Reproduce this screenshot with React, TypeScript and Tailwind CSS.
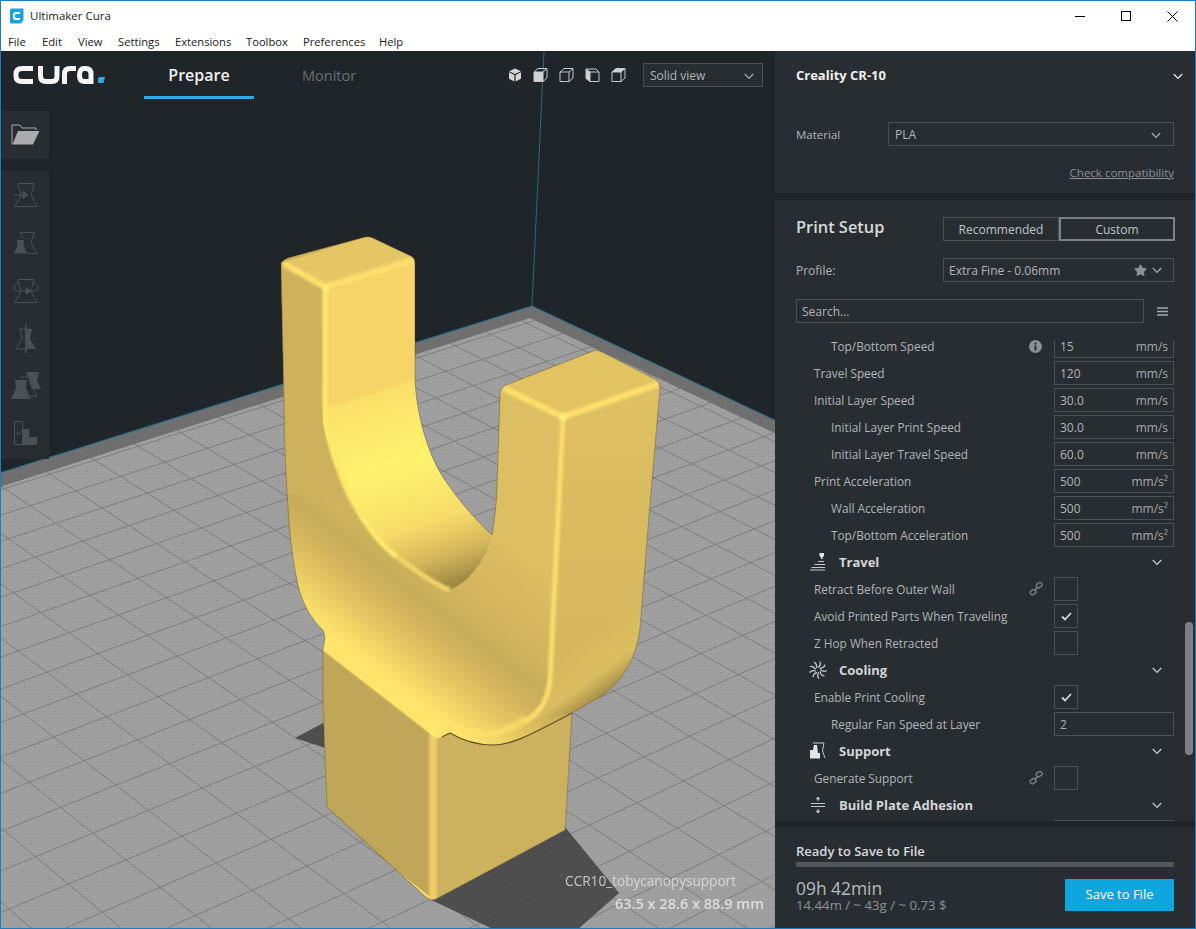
import { Star } from "lucide-react"

const P0 = { x: 532, y: 306 }
const VA = { x: 4043, y: -791 }
const VB = { x: -2108, y: -932 }

const SILHOUETTE =
  "M281 263 Q283 260 288 258 L365 237 Q369 236 373 238 L411 256 Q415 258 415 264 L415 380 C417 420 430 460 447 483 C462 505 478 522 492 535 C495 515 497 500 497 487 L500 395 Q500 388 506 385 L593 351 Q597 349 602 352 L655 379 Q660 382 660 388 L650 503 L640 628 C637 655 625 680 600 697 L572 713 L565 830 L436 899 Q431 901 427 898 L327 807 L323 703 L323 650 L325 637 L323 630 C310 618 300 600 296 575 C291 550 288 520 285 453 Z"

const RIGHT_FACE =
  "M566 417 L662 383 L650 503 L640 628 C637 655 625 680 600 697 L572 713 L526 722 C545 708 548 695 549 680 L560 520 Z"

// grid lines of the build plate, spaced in perspective
function gridLines() {
  const lines: { x1: number; y1: number; x2: number; y2: number }[] = []
  for (let i = 0; i < 42; i++) {
    const a = 0.0074 + 0.0102 * i
    const f = a / (1 - a)
    const px = P0.x + (P0.x - VB.x) * f
    const py = P0.y + (P0.y - VB.y) * f
    const s = (py - VA.y) / (px - VA.x)
    lines.push({ x1: -20, y1: py + s * (-20 - px), x2: 800, y2: py + s * (800 - px) })
  }
  for (let i = 0; i < 42; i++) {
    const a = 0.0071 + 0.0098 * i
    const f = a / (1 - a)
    const px = P0.x + (P0.x - VA.x) * f
    const py = P0.y + (P0.y - VA.y) * f
    const s = (py - VB.y) / (px - VB.x)
    lines.push({ x1: -900, y1: py + s * (-900 - px), x2: 800, y2: py + s * (800 - px) })
  }
  return lines
}

function Scene() {
  const lines = gridLines()
  return (
    <svg className="absolute inset-0" width="774" height="877" viewBox="1 51 774 877">
      <defs>
        <pattern id="dots" width="3" height="3" patternUnits="userSpaceOnUse">
          <rect width="3" height="3" fill="#a1a1a1" />
          <rect width="1" height="1" fill="#939393" />
          <rect x="1.5" y="1.5" width="1" height="1" fill="#989898" />
        </pattern>
        <clipPath id="plate">
          <polygon points="532,306 -10,476 -10,940 800,940 800,432" />
        </clipPath>
        <clipPath id="model">
          <path d={SILHOUETTE} />
        </clipPath>
        <filter id="b1" x="-20%" y="-20%" width="140%" height="140%">
          <feGaussianBlur stdDeviation="1" />
        </filter>
        <filter id="b15" x="-20%" y="-20%" width="140%" height="140%">
          <feGaussianBlur stdDeviation="1.5" />
        </filter>
        <filter id="b2" x="-20%" y="-20%" width="140%" height="140%">
          <feGaussianBlur stdDeviation="2" />
        </filter>
        <filter id="strip" x="-50%" y="-5%" width="200%" height="110%">
          <feGaussianBlur stdDeviation="1" />
        </filter>
        <linearGradient id="band" gradientUnits="userSpaceOnUse" x1="380" y1="694" x2="502" y2="536">
          <stop offset="0" stopColor="#ffe56d" />
          <stop offset="0.09" stopColor="#ffe36c" />
          <stop offset="0.25" stopColor="#e6c963" />
          <stop offset="0.42" stopColor="#cfb25b" />
          <stop offset="0.5" stopColor="#c8ad5a" />
          <stop offset="0.7" stopColor="#d3b65e" />
          <stop offset="1" stopColor="#dcbf62" />
        </linearGradient>
        <linearGradient id="curve" gradientUnits="userSpaceOnUse" x1="368" y1="392" x2="432" y2="590">
          <stop offset="0" stopColor="#f6d468" />
          <stop offset="0.03" stopColor="#fae06a" />
          <stop offset="0.38" stopColor="#fff36e" />
          <stop offset="0.68" stopColor="#f6dc68" />
          <stop offset="0.86" stopColor="#d4b75c" />
          <stop offset="1" stopColor="#a08a45" />
        </linearGradient>
        <linearGradient id="right" x1="0" y1="0" x2="0" y2="1">
          <stop offset="0" stopColor="#dfc163" />
          <stop offset="1" stopColor="#d2b55d" />
        </linearGradient>
        <linearGradient id="under" gradientUnits="userSpaceOnUse" x1="585" y1="640" x2="622" y2="692">
          <stop offset="0" stopColor="#e4c863" stopOpacity="0" />
          <stop offset="0.55" stopColor="#dcc061" stopOpacity="0.7" />
          <stop offset="1" stopColor="#857239" />
        </linearGradient>
      </defs>

      <rect x="0" y="51" width="780" height="880" fill="#1f2528" />
      <polygon points="532,306 -10,476 -10,940 800,940 800,432" fill="#6f6f6f" />
      <polygon points="530,318 -10,490 -10,940 800,940 800,445" fill="url(#dots)" />
      <g clipPath="url(#plate)" stroke="#747474" strokeWidth="1" strokeOpacity="0.75">
        {lines.map((l, i) => (
          <line key={i} x1={l.x1} y1={l.y1} x2={l.x2} y2={l.y2} />
        ))}
      </g>
      <polyline points="-10,476 532,306 800,432" fill="none" stroke="#1f6f8e" strokeWidth="1" />
      <line x1="544" y1="51" x2="532" y2="306" stroke="#1f6f8e" strokeWidth="1" />

      <polygon
        points="295,738 325,722 330,810 427,898 495,930 577,930 619,893 565,827"
        fill="#474747"
        fillOpacity="0.92"
      />

      <g clipPath="url(#model)">
        <rect x="270" y="230" width="400" height="680" fill="url(#band)" />
        <path d="M270 230 H330 V440 L345 500 L270 490 Z" fill="#ceb15c" />
        <path d={RIGHT_FACE} fill="url(#right)" />
        <path d={RIGHT_FACE} fill="url(#under)" />
        <path
          d="M325 287 L415 259 L415 380 C417 420 430 460 447 483 C462 505 478 522 492 535 C487 557 470 582 450 590 C435 585 415 570 397 557 C370 537 350 500 340 473 C330 450 323 430 323 420 Z"
          fill="url(#curve)"
        />
        <polygon points="281,263 368,237 415,259 325,287" fill="#e5c665" />
        <polygon points="503,387 597,350 660,383 563,417" fill="#e2c362" />

        <g fill="none" filter="url(#b15)" stroke="#ffe06c" strokeWidth="6">
          <polyline points="284,264 325,287 413,260" />
          <polyline points="503,388 563,417 658,384" />
        </g>
        <g fill="none" filter="url(#b1)" stroke="#ffe06c" strokeWidth="5">
          <path d="M325 288 L325 405 C327 440 335 460 340 473 C350 500 370 537 397 557" stroke="#ffe86d" />
          <path d="M563 417 L550 680 C548 700 540 712 525 722" stroke="#fbdb6a" />
        </g>
        <circle cx="326" cy="288" r="3" fill="#fff17a" filter="url(#b1)" />
        <circle cx="563" cy="417" r="3.5" fill="#fff17a" filter="url(#b1)" />
        <path d="M397 557 C415 570 435 585 450 590" fill="none" stroke="#efd366" strokeWidth="5" filter="url(#b1)" />

        <polygon points="323,650 434,736 434,900 320,810" fill="#bfa658" />
        <path d="M434 740 L450 733 C465 742 480 745 493 745 C510 745 525 738 572 713 L566 832 L434 900 Z" fill="#ccb15e" />
        <path d="M526 718 C505 735 480 738 452 727" fill="none" stroke="#fde16b" strokeWidth="5" filter="url(#b2)" />
        <path d="M323 648 L432 733" fill="none" stroke="#ffe56c" strokeWidth="3" filter="url(#b1)" />
        <rect x="429" y="736" width="8" height="166" fill="#eecd67" filter="url(#strip)" />
        <circle cx="434" cy="733" r="4" fill="#ffeb70" filter="url(#b1)" />
        <path d="M442 737 L450 733 C465 742 480 745 493 745 C510 745 525 738 572 713" fill="none" stroke="#5f5026" strokeWidth="1.2" />
      </g>
      <path d={SILHOUETTE} fill="none" stroke="#54461f" strokeWidth="0.8" strokeOpacity="0.5" />
    </svg>
  )
}

function CuraLogo() {
  return (
    <svg width="96" height="24" viewBox="0 0 96 24" fill="none" className="block">
      <g stroke="#f4f4f4" strokeWidth="5">
        <path d="M20 5.5 H9 Q3 5.5 3 11 V13 Q3 18.5 9 18.5 H20" />
        <path d="M27.5 3 V13 Q27.5 18.5 33 18.5 H39 Q44 18.5 44 13 V3" />
        <path d="M51.5 21 V11 Q51.5 5.5 57 5.5 H63" />
        <path d="M78 21 V11 Q78 5.5 72.5 5.5 H71 M78 18.5 H71.5 Q66.5 18.5 66.5 12.5 Q66.5 5.5 71 5.5" />
      </g>
      <path d="M85 15.5 Q85.5 14 87 14 H92 L90.5 20 H86 Q84.5 20 85 18.5 Z" fill="#36a9e0" />
    </svg>
  )
}

function Chevron({ color = "#a6a9ab", w = 10 }: { color?: string; w?: number }) {
  return (
    <svg width={w} height="7" viewBox="0 0 10 7" fill="none" className="shrink-0">
      <path d="M0.8 1 L5 5.4 L9.2 1" stroke={color} strokeWidth="1.3" />
    </svg>
  )
}

function ViewIcon({ kind }: { kind: number }) {
  const stroke = "#c9c9c9"
  if (kind === 0) {
    return (
      <svg width="14" height="14" viewBox="0 0 14 14">
        <path d="M7 0.5 L13 3.2 L7 6 L1 3.2 Z" fill="#d6d6d6" />
        <path d="M1 4.3 L6.4 6.9 V13.5 L1 10.8 Z" fill="#d6d6d6" />
        <path d="M13 4.3 L7.6 6.9 V13.5 L13 10.8 Z" fill="#d6d6d6" />
      </svg>
    )
  }
  return (
    <svg width="15" height="14" viewBox="0 0 15 14" fill="none">
      {kind === 1 && <rect x="1" y="4" width="9" height="9.5" fill="#d2d2d2" />}
      {kind === 3 && <path d="M1 1 L5 4 V13.5 L1 10.5 Z" fill="#d2d2d2" />}
      {kind === 4 && <path d="M5 0.5 H14 L10 4 H1 Z" fill="#d2d2d2" />}
      {kind === 3 ? (
        <path d="M1 1 H11 L14 4 V13.5 H5 L1 10.5 Z M5 4 H14 M5 4 V13.5 M1 1 L5 4" stroke={stroke} />
      ) : (
        <path d="M1 4 L5 0.5 H14 V10 L10 13.5 H1 Z M1 4 H10 V13.5 M10 4 L14 0.5" stroke={stroke} />
      )}
    </svg>
  )
}

function ToolIcon({ kind }: { kind: number }) {
  const c = "#4b5054"
  return (
    <svg width="48" height="48" viewBox="0 0 48 48" fill="none">
      {kind === 0 && (
        <g stroke={c}>
          <path d="M17 12.5 H33 L30 24 L36 35.5 H14 L20 24 Z" />
          <path d="M13 24 H22" />
          <path d="M22 20.5 L27 24 L22 27.5 Z" fill={c} />
        </g>
      )}
      {kind === 1 && (
        <g>
          <path d="M19 13.5 H33.5 L30 24 L36 34.5 H26 M19 13.5 L22 20" stroke={c} />
          <path d="M16 21 H23 L22.5 26 L26 34.5 H13 L16.5 26 Z" fill={c} />
        </g>
      )}
      {kind === 2 && (
        <g stroke={c}>
          <path d="M17 12.5 H33 L30 24 L36 35.5 H14 L20 24 Z" />
          <path d="M19 16 Q12 16 13 21 Q14 25 19 24 M31 16 Q38 16 37 21 Q36 25 31 24" />
          <path d="M21 24 H25" />
          <path d="M25 21 L30 24 L25 27 Z" fill={c} />
        </g>
      )}
      {kind === 3 && (
        <g>
          <path d="M19 14 H25 V34 H15 L21 24 Z" stroke={c} />
          <path d="M25 14 H31 L29 24 L35 34 H25 Z" fill={c} />
          <path d="M25 9 V38" stroke={c} strokeWidth="1.5" />
        </g>
      )}
      {kind === 4 && (
        <g>
          <path d="M25 9 H38 L36 18 L40 26 H31 Z" fill={c} />
          <path d="M18 14 H31 L30 21 L36 33 H28" stroke={c} />
          <path d="M14 17 H26 L25 25 L30 36 H10 L15 25 Z" fill={c} />
        </g>
      )}
      {kind === 5 && (
        <g>
          <rect x="13.5" y="10.5" width="8" height="23" stroke={c} />
          <path d="M16 21 L19 24 M19 21 L16 24" stroke={c} />
          <path d="M21 18 H28 V26 H36 V34 H21 Z" fill={c} />
        </g>
      )}
    </svg>
  )
}

function SectionIcon({ kind }: { kind: string }) {
  const c = "#c4c6c8"
  return (
    <svg width="18" height="20" viewBox="0 0 18 20" fill="none">
      {kind === "Travel" && (
        <g>
          <path d="M10.5 1 H15 V4 L13.5 5.5 V7 H12 V5.5 L10.5 4 Z" fill="#e4e4e4" />
          <path d="M9 9.5 H15 M5.5 12.5 H16 M2.5 15.5 H16 M1 18 H16" stroke={c} />
        </g>
      )}
      {kind === "Cooling" && (
        <g stroke={c} strokeWidth="1.3">
          {[0, 40, 80, 120, 160, 200, 240, 280, 320].map((r) => (
            <path key={r} d="M9 7.5 Q12.5 5 11 1.5" transform={`rotate(${r} 9 10)`} />
          ))}
        </g>
      )}
      {kind === "Support" && (
        <g>
          <path d="M4 2 H15 L13.5 10 L16 17" stroke={c} />
          <path d="M1 17.5 V9 H4 L5 4 H8 L9 12 H11 V17.5 Z" fill="#e4e4e4" />
        </g>
      )}
      {kind === "Adhesion" && (
        <g stroke={c}>
          <path d="M2 8.5 H16 M2 11.5 H16 M9 2 V6 M9 14 V18" />
          <path d="M7.5 4 L9 2 L10.5 4 Z M7.5 16 L9 18 L10.5 16 Z" fill={c} />
        </g>
      )}
    </svg>
  )
}

function LinkIcon() {
  return (
    <svg width="14" height="14" viewBox="0 0 14 14" fill="none" stroke="#7c8083" strokeWidth="1.4">
      <rect x="7" y="1" width="6" height="4.4" rx="2.2" transform="rotate(-35 10 3)" />
      <rect x="1" y="8" width="6" height="4.4" rx="2.2" transform="rotate(-35 4 10)" />
      <path d="M5.5 8.5 L8.5 5.5" />
    </svg>
  )
}

function InfoIcon() {
  return (
    <svg width="13" height="13" viewBox="0 0 13 13">
      <circle cx="6.5" cy="6.5" r="6.5" fill="#8d9093" />
      <rect x="5.5" y="5.5" width="2" height="5" fill="#282d32" />
      <rect x="5.5" y="2.5" width="2" height="2" fill="#282d32" />
    </svg>
  )
}

type Row =
  | { type: "num"; label: string; value: string; unit?: string; indent: number; icon?: "info" }
  | { type: "check"; label: string; checked: boolean; icon?: "link" }
  | { type: "section"; label: string; icon: string }

const rows: Row[] = [
  { type: "num", label: "Top/Bottom Speed", value: "15", unit: "mm/s", indent: 1, icon: "info" },
  { type: "num", label: "Travel Speed", value: "120", unit: "mm/s", indent: 0 },
  { type: "num", label: "Initial Layer Speed", value: "30.0", unit: "mm/s", indent: 0 },
  { type: "num", label: "Initial Layer Print Speed", value: "30.0", unit: "mm/s", indent: 1 },
  { type: "num", label: "Initial Layer Travel Speed", value: "60.0", unit: "mm/s", indent: 1 },
  { type: "num", label: "Print Acceleration", value: "500", unit: "mm/s²", indent: 0 },
  { type: "num", label: "Wall Acceleration", value: "500", unit: "mm/s²", indent: 1 },
  { type: "num", label: "Top/Bottom Acceleration", value: "500", unit: "mm/s²", indent: 1 },
  { type: "section", label: "Travel", icon: "Travel" },
  { type: "check", label: "Retract Before Outer Wall", checked: false, icon: "link" },
  { type: "check", label: "Avoid Printed Parts When Traveling", checked: true },
  { type: "check", label: "Z Hop When Retracted", checked: false },
  { type: "section", label: "Cooling", icon: "Cooling" },
  { type: "check", label: "Enable Print Cooling", checked: true },
  { type: "num", label: "Regular Fan Speed at Layer", value: "2", indent: 1 },
  { type: "section", label: "Support", icon: "Support" },
  { type: "check", label: "Generate Support", checked: false, icon: "link" },
  { type: "section", label: "Build Plate Adhesion", icon: "Adhesion" },
  { type: "num", label: "", value: "", indent: 0 },
]

function SettingRow({ row }: { row: Row }) {
  if (row.type === "section") {
    return (
      <div className="flex items-center h-6 mb-[3px] pl-[34px] pr-[33px]">
        <div className="w-[30px]">
          <SectionIcon kind={row.icon} />
        </div>
        <span className="pt-[2px] text-[13px] font-bold text-[#d4d6d7]">{row.label}</span>
        <div className="ml-auto">
          <Chevron color="#c8cacb" />
        </div>
      </div>
    )
  }
  const isNum = row.type === "num"
  const indented = isNum && row.indent === 1
  return (
    <div className={`flex items-center h-6 mb-[3px] pr-[21px] ${indented ? "pl-[56px]" : "pl-[39px]"}`}>
      <span className="pt-[2px] text-[11.8px] text-[#b2b5b7]">{row.label}</span>
      <div className="ml-auto w-[36px] flex justify-start pl-[11px]">
        {row.icon === "info" && <InfoIcon />}
        {row.icon === "link" && <LinkIcon />}
      </div>
      {isNum ? (
        <div className="w-[120px] h-6 pt-[2px] border border-[#4b5054] flex items-center justify-between px-[5px] text-xs text-[#b2b5b7]">
          <span>{row.value}</span>
          <span className="text-[#a6a9ab]">{row.unit}</span>
        </div>
      ) : (
        <div className="mr-[96px] w-6 h-6 border border-[#4b5054] flex items-center justify-center">
          {row.checked && (
            <svg width="11" height="9" viewBox="0 0 11 9" fill="none">
              <path d="M1 4.5 L4 7.5 L10 1" stroke="#d8d8d8" strokeWidth="1.8" />
            </svg>
          )}
        </div>
      )}
    </div>
  )
}

const menus = [
  { name: "File", w: "w-[34px]" },
  { name: "Edit", w: "w-[36px]" },
  { name: "View", w: "w-[40px]" },
  { name: "Settings", w: "w-[57px]" },
  { name: "Extensions", w: "w-[71px]" },
  { name: "Toolbox", w: "w-[57px]" },
  { name: "Preferences", w: "w-[76px]" },
  { name: "Help", w: "w-[40px]" },
]

export default function App() {
  return (
    <div
      className="w-[1196px] h-[929px] flex flex-col border border-[#1b7cc0] bg-white overflow-hidden"
      style={{ fontFamily: '"Open Sans", sans-serif' }}
    >
      <div className="h-[30px] flex items-center shrink-0 pl-2 relative">
        <svg width="15" height="16" viewBox="0 0 15 16">
          <path d="M1 2 Q1 0.5 2.5 0.5 H14.5 V12 L12 15.5 H2.5 Q1 15.5 1 14 Z" fill="#1ba3de" />
          <path d="M11 5 H7 Q5 5 5 7 V9 Q5 11 7 11 H11" fill="none" stroke="#fff" strokeWidth="2" />
        </svg>
        <span className="ml-[6px] text-[11.5px] text-[#1a1a1a]">Ultimaker Cura</span>
        <div className="ml-auto flex items-center h-full">
          <div className="w-[46px] flex justify-center">
            <div className="w-[10px] h-px bg-black" />
          </div>
          <div className="w-[46px] flex justify-center">
            <div className="w-[10px] h-[10px] border border-black" />
          </div>
          <div className="w-[46px] flex justify-center">
            <svg width="11" height="11" viewBox="0 0 11 11">
              <path d="M0.5 0.5 L10.5 10.5 M10.5 0.5 L0.5 10.5" stroke="#000" />
            </svg>
          </div>
        </div>
      </div>
      <div className="h-[20px] pt-[2px] flex items-center shrink-0 text-[11.2px] text-[#1a1a1a] pl-[7px]">
        {menus.map((m) => (
          <span key={m.name} className={m.w}>
            {m.name}
          </span>
        ))}
      </div>

      <div className="flex-1 flex min-h-0 bg-[#1f2528]">
        <div className="relative w-[774px] shrink-0 overflow-hidden">
          <Scene />

          <div className="absolute inset-x-0 top-0 h-[48px] flex items-start">
            <div className="ml-[12px] mt-[12px]">
              <CuraLogo />
            </div>
            <div className="ml-[35px] w-[110px] h-[48px] border-b-[3px] border-[#36a9e0] flex justify-center pt-[12px] text-base font-semibold text-[#f2f2f2]">
              Prepare
            </div>
            <div className="ml-[48px] pt-[14px] text-[14.5px] text-[#6c6f71]">Monitor</div>
            <div className="ml-auto mr-[12px] mt-[12px] flex items-center">
              <div className="flex items-center gap-[11px] mr-[17px]">
                {[0, 1, 2, 3, 4].map((k) => (
                  <ViewIcon key={k} kind={k} />
                ))}
              </div>
              <div className="w-[120px] h-6 pt-[2px] border border-[#4b5054] bg-[#282d32] flex items-center justify-between pl-[6px] pr-[8px] text-xs text-[#b2b5b7]">
                Solid view
                <Chevron />
              </div>
            </div>
          </div>

          <div className="absolute left-0 top-[60px] w-[48px] flex flex-col gap-3">
            <div className="h-[48px] bg-[#282d32] flex items-center justify-center">
              <svg width="29" height="22" viewBox="0 0 29 22" fill="none">
                <path d="M1 20.5 V1 H9 L11 4 H25 V6" stroke="#a9abac" />
                <path d="M7 7 H28.5 L22 20.5 H1.5 Z" fill="#a9abac" />
              </svg>
            </div>
            <div className="h-[288px] bg-[#282d32] flex flex-col">
              {[0, 1, 2, 3, 4, 5].map((k) => (
                <ToolIcon key={k} kind={k} />
              ))}
            </div>
          </div>

          <div className="absolute right-[11px] bottom-[13px] flex flex-col items-end gap-[2px] text-[#e4e4e4]">
            <span className="text-[13.6px] mr-[28px] opacity-80">CCR10_tobycanopysupport</span>
            <span className="text-[14.5px] font-semibold opacity-90">63.5 x 28.6 x 88.9 mm</span>
          </div>
        </div>

        <div className="flex-1 flex flex-col min-w-0 bg-[#1f2528]">
          <div className="h-[142px] shrink-0 bg-[#282d32] pl-[21px] pr-[21px]">
            <div className="flex items-center justify-between h-[48px] pt-[2px]">
              <span className="text-[13px] font-bold text-[#f0f0f0]">Creality CR-10</span>
              <div className="-mr-[9px]">
                <Chevron color="#e6e6e6" />
              </div>
            </div>
            <div className="flex items-center mt-[23px]">
              <span className="w-[92px] pt-[2px] text-[11.5px] text-[#b2b5b7]">Material</span>
              <div className="flex-1 h-6 pt-[2px] border border-[#4b5054] flex items-center justify-between pl-[6px] pr-[12px] text-xs text-[#b2b5b7]">
                PLA
                <Chevron />
              </div>
            </div>
            <div className="mt-[18px] text-right text-[11.5px] text-[#8d9093] underline">Check compatibility</div>
          </div>

          <div className="mt-[7px] h-[621px] shrink-0 bg-[#282d32] flex flex-col relative overflow-hidden">
            <div className="shrink-0 pl-[21px] pr-[21px] pt-[17px]">
              <div className="flex items-center h-6">
                <span className="w-[147px] shrink-0 pb-[4px] text-[16.4px] font-semibold text-[#d8dadb]">Print Setup</span>
                <div className="w-[116px] h-6 shrink-0 pt-[2px] border border-[#4b5054] flex items-center justify-center text-xs text-[#c0c3c5]">
                  Recommended
                </div>
                <div className="w-[116px] h-6 pt-[2px] shrink-0 border-2 border-[#7e8285] flex items-center justify-center text-xs text-[#c0c3c5]">
                  Custom
                </div>
              </div>
              <div className="flex items-center h-6 mt-[17px]">
                <span className="w-[147px] pt-[2px] text-xs text-[#b2b5b7]">Profile:</span>
                <div className="flex-1 h-6 pt-[2px] border border-[#4b5054] flex items-center pl-[5px] pr-[11px] text-xs text-[#b2b5b7]">
                  Extra Fine - 0.06mm
                  <Star size={13} className="ml-auto mr-[5px] -mt-[2px] text-[#8d9093]" fill="currentColor" />
                  <div className="-mt-[2px]">
                    <Chevron />
                  </div>
                </div>
              </div>
              <div className="flex items-center h-6 mt-[17px]">
                <div className="w-[348px] h-6 pt-[2px] border border-[#4b5054] flex items-center pl-[5px] text-xs text-[#b2b5b7]">
                  Search...
                </div>
                <svg width="11" height="9" viewBox="0 0 11 9" className="ml-[13px]">
                  <path d="M0 1 H11 M0 4.5 H11 M0 8 H11" stroke="#a6a9ab" strokeWidth="1.4" />
                </svg>
              </div>
            </div>
            <div className="mt-[17px] flex-1 min-h-0 overflow-hidden">
              <div className="-mt-[6px]">
                {rows.map((r, i) => (
                  <SettingRow key={i} row={r} />
                ))}
              </div>
            </div>
            <div className="absolute right-[2px] top-[422px] w-2 h-[133px] rounded bg-[#7b8083]" />
          </div>

          <div className="mt-[6px] flex-1 bg-[#282d32] pl-[21px] pr-[21px] pt-[15px]">
            <div className="text-[13px] font-semibold text-[#d8dadb] leading-[18px]">Ready to Save to File</div>
            <div className="mt-[2px] h-[5px] bg-[#53575b]" />
            <div className="flex items-start justify-between mt-[12px]">
              <div className="flex flex-col gap-px">
                <div className="text-[17.4px] text-[#b8bbbd] leading-[18px]">09h 42min</div>
                <div className="text-[13.2px] text-[#8d9093] leading-[15px]">14.44m / ~ 43g / ~ 0.73 $</div>
              </div>
              <div className="w-[109px] h-[32px] bg-[#0fa6e0] flex items-center justify-center text-[13px] text-white">
                Save to File
              </div>
            </div>
          </div>
        </div>
      </div>
    </div>
  )
}
